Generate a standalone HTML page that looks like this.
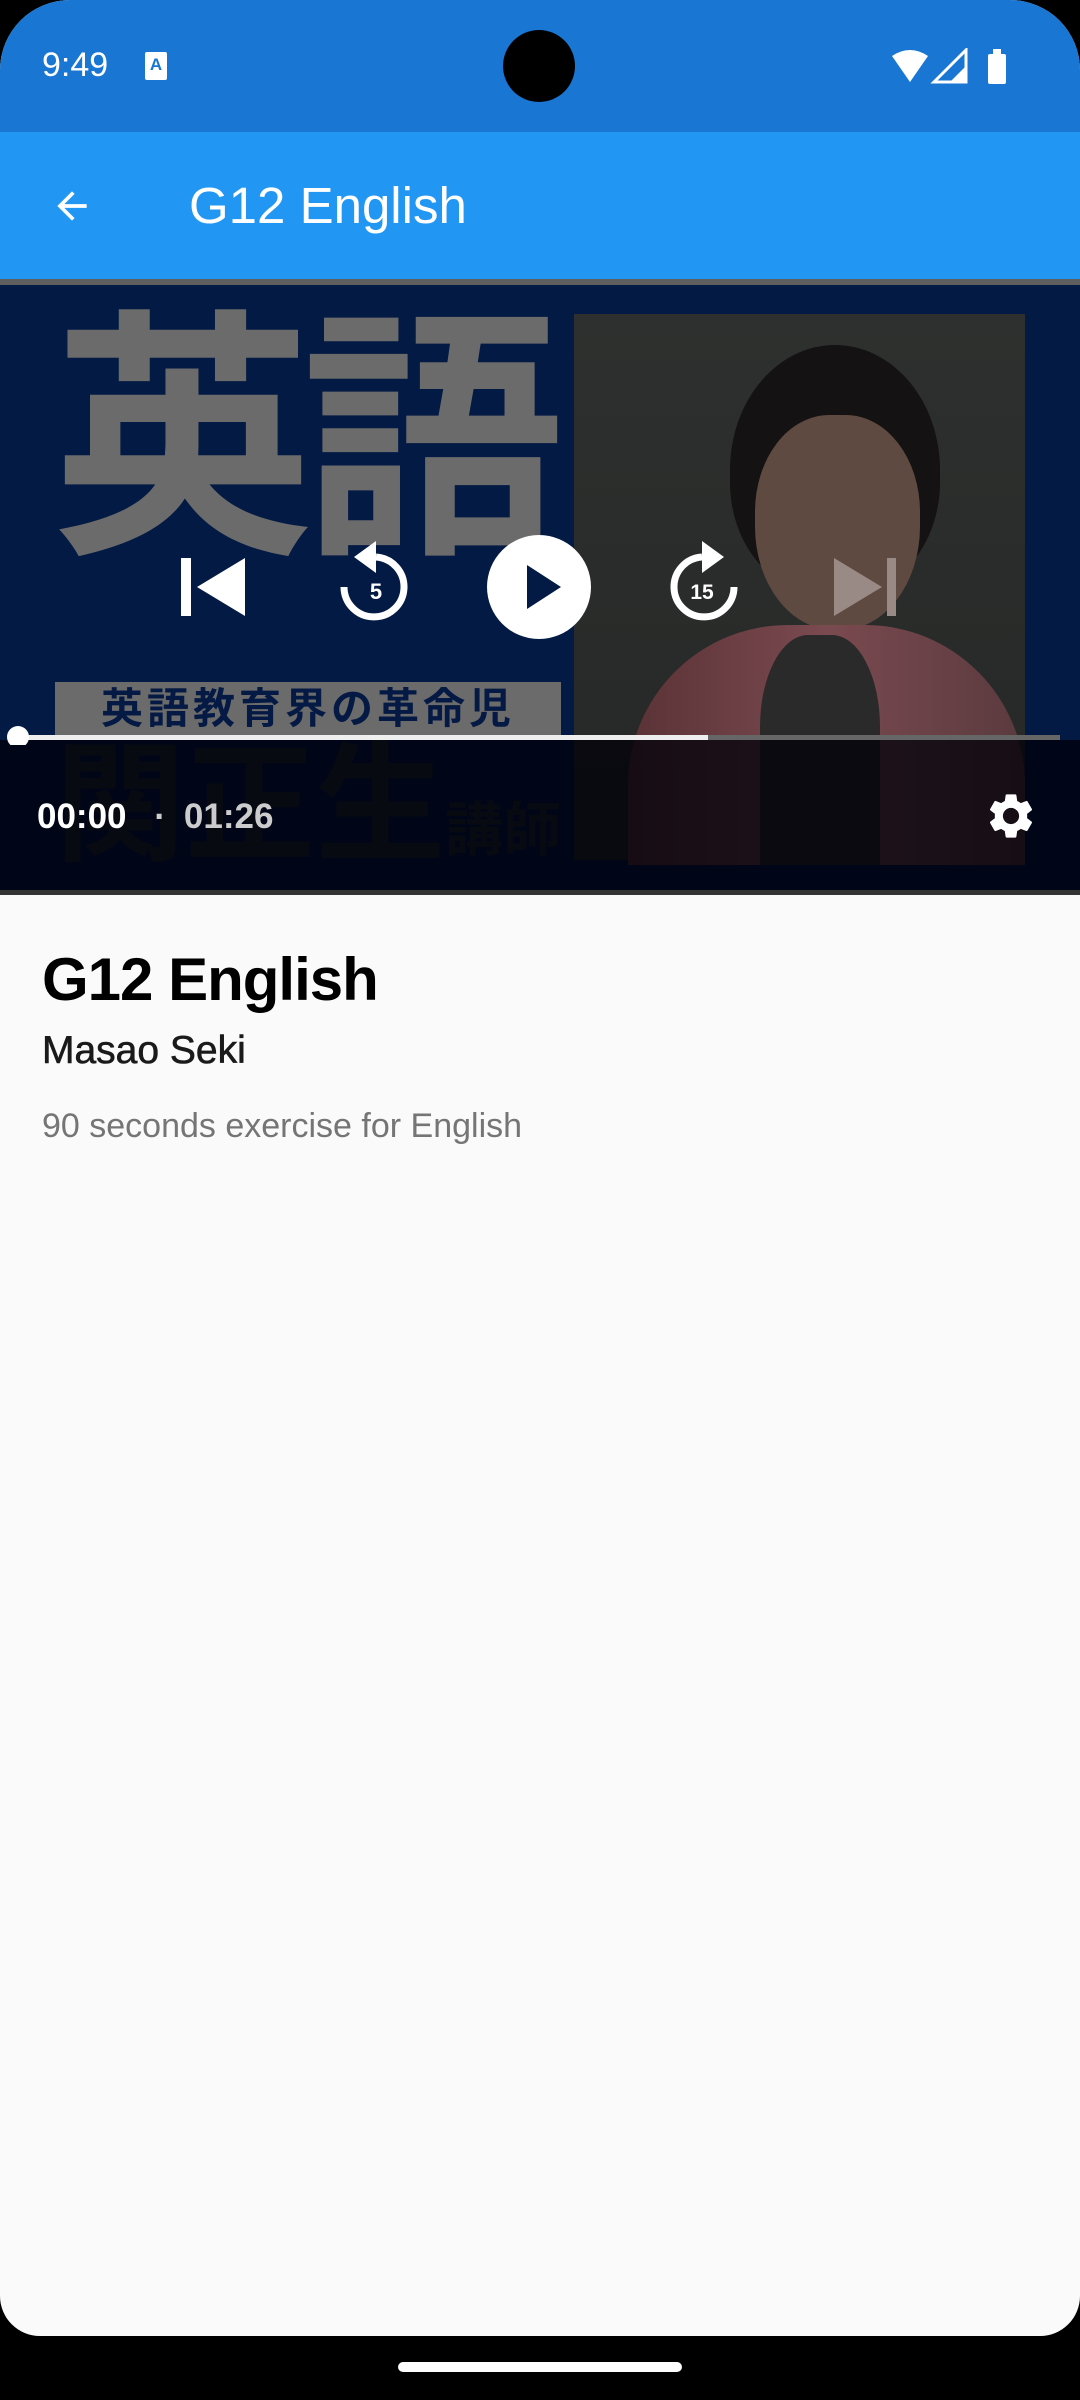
<!DOCTYPE html>
<html><head><meta charset="utf-8"><style>
*{margin:0;padding:0;box-sizing:border-box}
html,body{width:1080px;height:2400px;background:#000;overflow:hidden}
body{font-family:"Liberation Sans","Noto Sans CJK JP",sans-serif;position:relative}
.screen{position:absolute;left:0;top:0;width:1080px;height:2336px;background:#fafafa;border-radius:70px 70px 40px 40px;overflow:hidden}
.status{position:absolute;left:0;top:0;width:1080px;height:132px;background:#1976d2;color:#fff}
.appbar{position:absolute;left:0;top:132px;width:1080px;height:148px;background:#2196f3;color:#fff}
.video{position:absolute;left:0;top:280px;width:1080px;height:615px;background:#031a45;overflow:hidden}
.abs{position:absolute}
</style></head><body>
<div class="screen">
 <div class="status">
  <div class="abs" style="left:42px;top:46px;font-size:34px;">9:49</div>
  <div class="abs" style="left:145px;top:52px;width:22px;height:28px;background:#fff;border-radius:2px;color:#1976d2;font-size:17px;font-weight:bold;text-align:center;line-height:26px">A</div>
  <div class="abs" style="left:503px;top:30px;width:72px;height:72px;border-radius:50%;background:#000"></div>
  <svg class="abs" style="left:890px;top:48px" width="120" height="36" viewBox="0 0 120 36">
   <path d="M2 8 Q20 -4 38 8 L20 34 Z" fill="#fff"/>
   <path d="M44 34 L76 34 L76 2 Z" fill="none" stroke="#fff" stroke-width="3"/>
   <path d="M60 34 L76 34 L76 18 Z" fill="#fff"/>
   <rect x="98" y="6" width="18" height="30" rx="2" fill="#fff"/><rect x="103" y="1" width="8" height="6" fill="#fff"/>
  </svg>
 </div>
 <div class="appbar">
  <svg class="abs" style="left:50px;top:52px" width="44" height="44" viewBox="0 0 24 24"><path d="M20 11H7.83l5.59-5.59L12 4l-8 8 8 8 1.41-1.41L7.83 13H20v-2z" fill="#fff"/></svg>
  <div class="abs" style="left:189px;top:44px;font-size:51px;">G12 English</div>
 </div>
 <div class="abs" style="left:0;top:279px;width:1080px;height:6px;background:#5f5f5f"></div>
 <div class="video" style="top:285px;height:605px">
  <div class="abs" style="left:52px;top:22px;font-size:262px;line-height:270px;color:#6b6b6b;font-weight:bold;letter-spacing:-12px">英語</div>
  <div class="abs" style="left:55px;top:397px;width:506px;height:53px;background:#6b6b6b;color:#041a44;font-size:42px;font-weight:bold;line-height:53px;text-align:center;letter-spacing:4px">英語教育界の革命児</div>
  <div class="abs" style="left:55px;top:445px;font-size:130px;line-height:150px;color:#222830;font-weight:bold">関正生<span style="font-size:58px">講師</span></div>
  <div class="abs" style="left:574px;top:29px;width:451px;height:546px;background:linear-gradient(#2e302f,#262827)"></div>
  <div class="abs" style="left:730px;top:60px;width:210px;height:250px;border-radius:50% 50% 45% 45%;background:#141212"></div>
  <div class="abs" style="left:755px;top:130px;width:165px;height:215px;border-radius:45% 45% 48% 48%;background:#5e4a40"></div>
  <div class="abs" style="left:628px;top:340px;width:397px;height:240px;border-radius:160px 160px 0 0;background:linear-gradient(90deg,#5a3236,#7a4a50,#5a3a3e)"></div>
  <div class="abs" style="left:760px;top:350px;width:120px;height:230px;background:#2a2a2a;border-radius:40% 40% 0 0"></div>
  <div class="abs" style="left:0;top:455px;width:1080px;height:150px;background:rgba(0,0,8,0.75)"></div>
  <svg class="abs" style="left:0;top:0" width="1080" height="460">
   <rect x="181" y="273" width="10" height="58" fill="#fff"/>
   <path d="M245 273 L245 331 L197 302 Z" fill="#fff"/>
   <path d="M344 302 A30 30 0 1 0 376 272" fill="none" stroke="#fff" stroke-width="7"/>
   <path d="M376 256 L376 288 L354 272 Z" fill="#fff"/>
   <text x="376" y="314" fill="#fff" font-size="22" font-weight="bold" text-anchor="middle" font-family="Liberation Sans">5</text>
   <circle cx="539" cy="302" r="52" fill="#fff"/>
   <path d="M527 280 L527 324 L561 302 Z" fill="#031a45"/>
   <path d="M734 302 A30 30 0 1 1 702 272" fill="none" stroke="#fff" stroke-width="7"/>
   <path d="M702 256 L702 288 L724 272 Z" fill="#fff"/>
   <text x="702" y="314" fill="#fff" font-size="21" font-weight="bold" text-anchor="middle" font-family="Liberation Sans">15</text>
   <path d="M834 273 L834 331 L882 302 Z" fill="#9a8a86"/>
   <rect x="887" y="273" width="9" height="58" fill="#9a8a86"/>
   <rect x="18" y="450" width="1042" height="5" fill="#666"/>
   <rect x="18" y="450" width="690" height="5" fill="#eee"/>
   <circle cx="18" cy="452" r="11" fill="#fff"/>
  </svg>
  <div class="abs" style="left:37px;top:512px;font-size:35px;font-weight:bold;color:#fff">00:00 <span style="color:#ccc;padding:0 18px">·</span><span style="color:#ccc">01:26</span></div>
  <svg class="abs" style="left:984px;top:504px" width="54" height="54" viewBox="0 0 24 24"><path fill="#fff" d="M19.14 12.94c.04-.3.06-.61.06-.94 0-.32-.02-.64-.07-.94l2.030-1.58a.49.49 0 0 0 .12-.61l-1.92-3.32a.488.488 0 0 0-.59-.22l-2.39.96c-.5-.38-1.03-.7-1.62-.94l-.36-2.540a.484.484 0 0 0-.48-.41h-3.84c-.24 0-.43.17-.47.41l-.36 2.54c-.59.24-1.13.57-1.62.94l-2.39-.96c-.22-.08-.47 0-.59.22L2.74 8.87c-.12.21-.08.47.12.61l2.03 1.58c-.05.3-.09.63-.09.94s.02.64.07.94l-2.03 1.58a.49.49 0 0 0-.12.61l1.92 3.32c.12.22.37.29.59.22l2.39-.96c.5.38 1.03.7 1.62.94l.36 2.54c.05.24.24.41.48.41h3.84c.24 0 .44-.17.47-.41l.36-2.54c.59-.24 1.13-.56 1.62-.94l2.39.96c.22.08.47 0 .59-.22l1.92-3.32c.12-.22.07-.47-.12-.61l-2.01-1.58zM12 15.6c-1.98 0-3.6-1.62-3.6-3.6s1.62-3.6 3.6-3.6 3.6 1.62 3.6 3.6-1.62 3.6-3.6 3.6z"/></svg>
 </div>
 <div class="abs" style="left:0;top:890px;width:1080px;height:5px;background:#333"></div>
 <div class="abs" style="left:42px;top:945px;font-size:60px;font-weight:bold;color:#000;letter-spacing:-1px">G12 English</div>
 <div class="abs" style="left:42px;top:1029px;font-size:39px;color:#1a1a1a;-webkit-text-stroke:0.6px #1a1a1a">Masao Seki</div>
 <div class="abs" style="left:42px;top:1107px;font-size:34px;color:#757575">90 seconds exercise for English</div>
</div>
<div class="abs" style="left:398px;top:2362px;width:284px;height:10px;border-radius:5px;background:#fff"></div>
</body></html>
